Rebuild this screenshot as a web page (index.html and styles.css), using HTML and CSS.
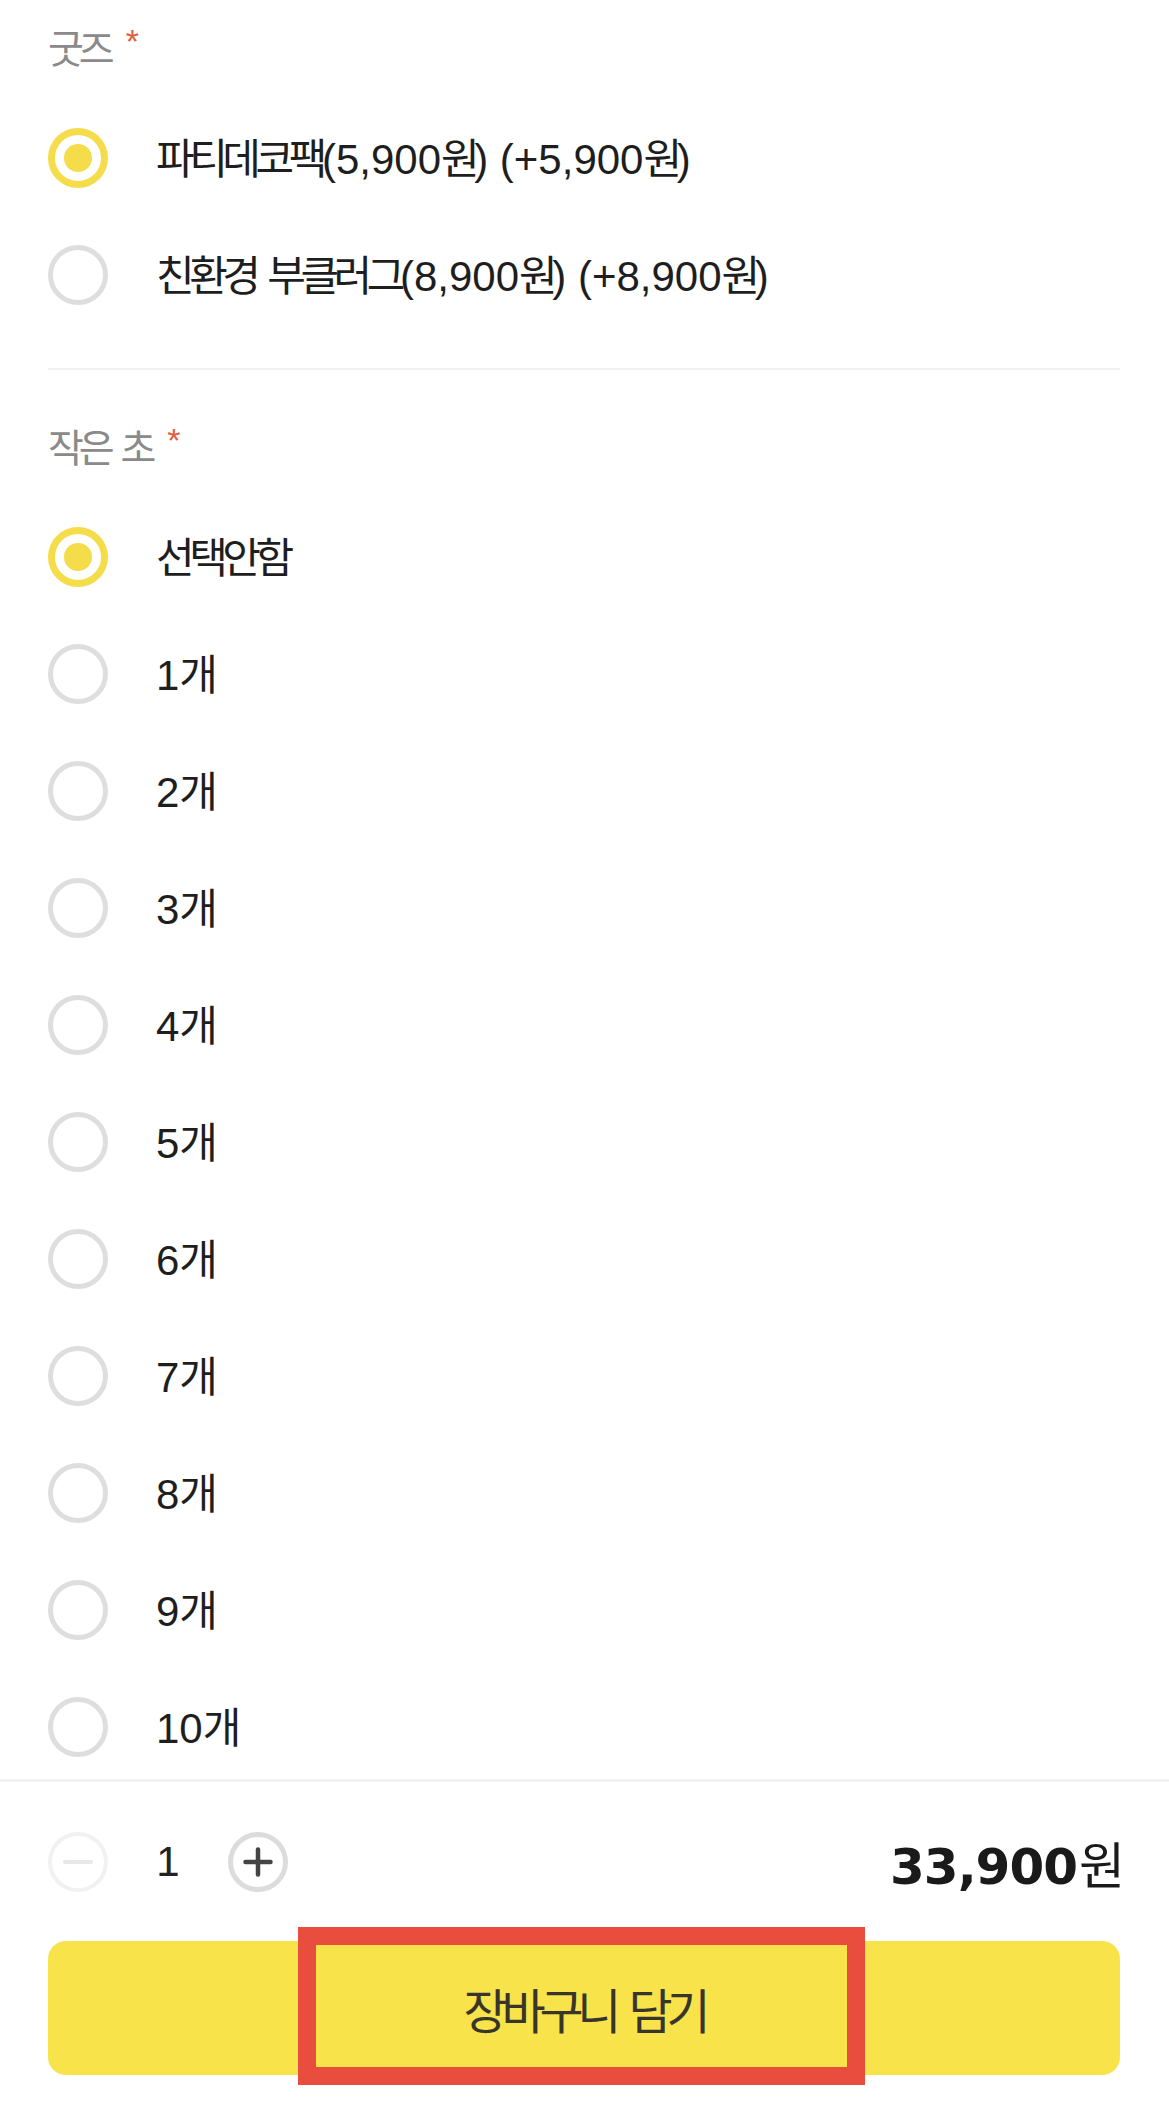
FILE: index.html
```html
<!DOCTYPE html>
<html lang="ko">
<head>
<meta charset="utf-8">
<title>옵션 선택</title>
<link rel="stylesheet" href="styles.css">
</head>
<body>
<div class="page">
  <main class="options">
    <section class="group">
      <h3 class="group-title"><span class="ko">굿즈</span><span class="req">*</span></h3>
      <ul class="choices">
        <li class="choice"><span class="radio on"></span><span class="label"><span class="ko">파티데코팩</span>(5,900<span class="ko">원</span>) (+5,900<span class="ko">원</span>)</span></li>
        <li class="choice"><span class="radio"></span><span class="label"><span class="ko">친환경</span> <span class="ko">부클러그</span>(8,900<span class="ko">원</span>) (+8,900<span class="ko">원</span>)</span></li>
      </ul>
    </section>
    <section class="group">
      <h3 class="group-title"><span class="ko">작은</span> <span class="ko">초</span><span class="req">*</span></h3>
      <ul class="choices">
        <li class="choice"><span class="radio on"></span><span class="label"><span class="ko">선택안함</span></span></li>
        <li class="choice"><span class="radio"></span><span class="label">1<span class="ko">개</span></span></li>
        <li class="choice"><span class="radio"></span><span class="label">2<span class="ko">개</span></span></li>
        <li class="choice"><span class="radio"></span><span class="label">3<span class="ko">개</span></span></li>
        <li class="choice"><span class="radio"></span><span class="label">4<span class="ko">개</span></span></li>
        <li class="choice"><span class="radio"></span><span class="label">5<span class="ko">개</span></span></li>
        <li class="choice"><span class="radio"></span><span class="label">6<span class="ko">개</span></span></li>
        <li class="choice"><span class="radio"></span><span class="label">7<span class="ko">개</span></span></li>
        <li class="choice"><span class="radio"></span><span class="label">8<span class="ko">개</span></span></li>
        <li class="choice"><span class="radio"></span><span class="label">9<span class="ko">개</span></span></li>
        <li class="choice"><span class="radio"></span><span class="label">10<span class="ko">개</span></span></li>
      </ul>
    </section>
  </main>
  <footer class="footer">
    <div class="qty-row">
      <div class="stepper">
        <button class="step minus" aria-label="빼기">
          <svg viewBox="0 0 60 60" width="60" height="60"><line x1="17" y1="30" x2="43" y2="30" stroke="#e8e8e8" stroke-width="4" stroke-linecap="round"/></svg>
        </button>
        <span class="count">1</span>
        <button class="step plus" aria-label="더하기">
          <svg viewBox="0 0 60 60" width="60" height="60"><line x1="17.5" y1="30" x2="42.5" y2="30" stroke="#444" stroke-width="4.5" stroke-linecap="round"/><line x1="30" y1="17.5" x2="30" y2="42.5" stroke="#444" stroke-width="4.5" stroke-linecap="round"/></svg>
        </button>
      </div>
      <div class="price"><span class="num">33,900</span><span class="won">원</span></div>
    </div>
    <div class="cta-wrap">
      <button class="cta"><span class="ko">장바구니</span> <span class="ko">담기</span></button>
      <div class="highlight"></div>
    </div>
  </footer>
</div>
</body>
</html>
```
FILE: styles.css
```css
html, body {
  margin: 0;
  padding: 0;
  height: 100%;
  background: #ffffff;
}
body {
  font-family: "Liberation Sans", "Noto Sans CJK KR", sans-serif;
  color: #1e1e1e;
}
.page {
  height: 100vh;
  display: flex;
  flex-direction: column;
}
.options {
  flex: 1;
  overflow: hidden;
  padding: 0 49px 0 48px;
}
.ko {
  font-family: "Noto Sans CJK KR", sans-serif;
  letter-spacing: -0.13em;
}
.group {
  padding: 47px 0 35px;
}
.group:first-child {
  padding-top: 18px;
}
.group + .group {
  border-top: 2px solid #f1f1f1;
}
.group-title {
  height: 56px;
  margin: 0 0 25px;
  font-size: 39px;
  font-weight: normal;
  line-height: 56px;
  color: #8a8a8a;
  white-space: nowrap;
}
.req {
  margin-left: 16px;
  color: #e0603f;
  font-size: 34px;
  vertical-align: top;
  line-height: 46px;
}
.choices {
  list-style: none;
  margin: 0;
  padding: 0;
}
.choice {
  display: flex;
  align-items: center;
  gap: 48px;
  height: 117px;
}
.radio {
  flex: none;
  width: 60px;
  height: 60px;
  box-sizing: border-box;
  border-radius: 50%;
  border: 5px solid #dedede;
  display: flex;
  align-items: center;
  justify-content: center;
}
.radio.on {
  border: 7px solid #f5dc4b;
}
.radio.on::after {
  content: "";
  width: 28px;
  height: 28px;
  border-radius: 50%;
  background: #f5dc4b;
}
.label {
  font-size: 42px;
  line-height: 56px;
  color: #1e1e1e;
  white-space: nowrap;
}
.footer {
  flex: none;
  border-top: 3px solid #f2f2f2;
  padding: 50px 49px 38px 48px;
}
.qty-row {
  display: flex;
  align-items: center;
  justify-content: space-between;
  height: 60px;
  margin-bottom: 49px;
}
.stepper {
  display: flex;
  align-items: center;
}
.step {
  width: 60px;
  height: 60px;
  padding: 0;
  margin: 0;
  box-sizing: border-box;
  border-radius: 50%;
  background: #fff;
  display: flex;
  align-items: center;
  justify-content: center;
}
.step svg {
  display: block;
  flex: none;
}
.step.minus {
  border: 4px solid #f1f1f1;
}
.step.plus {
  border: 5px solid #dcdcdc;
}
.count {
  width: 120px;
  text-align: center;
  font-size: 42px;
  line-height: 60px;
  color: #222;
}
.price {
  display: flex;
  align-items: baseline;
  color: #1a1a1a;
}
.price .num {
  font-family: "DejaVu Sans", sans-serif;
  font-weight: bold;
  font-size: 50px;
  letter-spacing: -1px;
}
.price .won {
  font-family: "Noto Sans CJK KR", sans-serif;
  font-size: 50px;
  letter-spacing: -0.1em;
  margin-left: 2px;
}
.cta-wrap {
  position: relative;
}
.cta {
  display: block;
  width: 100%;
  height: 134px;
  margin: 0;
  padding: 0;
  border: none;
  border-radius: 18px;
  background: #f9e34b;
  color: #38352a;
  font-family: "Liberation Sans", "Noto Sans CJK KR", sans-serif;
  font-size: 48px;
}
.cta .ko {
  letter-spacing: -0.13em;
}
.highlight {
  position: absolute;
  left: 250px;
  top: -14px;
  width: 567px;
  height: 158px;
  box-sizing: border-box;
  border: 18px solid #e84d3d;
  pointer-events: none;
}
```
